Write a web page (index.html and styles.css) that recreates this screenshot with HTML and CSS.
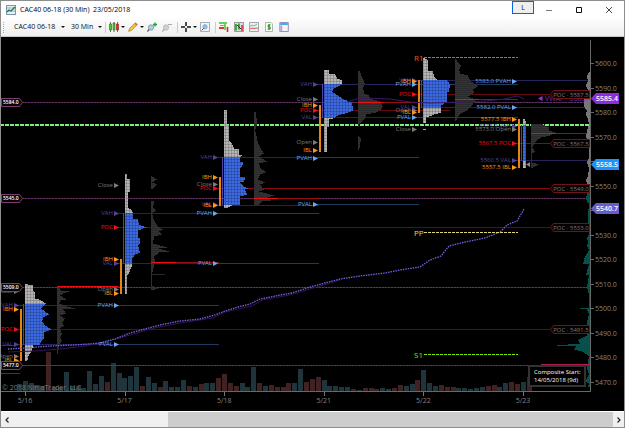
FILE: index.html
```
<!DOCTYPE html>
<html lang="en">
<head>
<meta charset="utf-8">
<title>CAC40 06-18 (30 Min) 23/05/2018</title>
<link rel="stylesheet" href="styles.css">
</head>
<body>
<main class="window">
  <header class="titlebar">
    <svg class="app-icon" viewBox="0 0 10 10"><rect x=".5" y=".5" width="9" height="9" fill="#e8f0f4" stroke="#7e94a8"/><path d="M1 3h8M1 6h8" stroke="#89a8cd"/><path d="M1 7l2-2 2 1 4-4" fill="none" stroke="#267b39" stroke-width="1.3"/></svg>
    <h1>CAC40 06-18 (30 Min)&nbsp; 23/05/2018</h1>
    <div class="window-controls">
      <button class="link-button">L</button>
      <button aria-label="Minimize"><svg viewBox="0 0 8 8"><path d="M1 4.500h6" stroke="#777"/></svg></button>
      <button aria-label="Maximize"><svg viewBox="0 0 8 8"><path d="M1.500 1.500h5v5h-5z" fill="none" stroke="#111"/></svg></button>
      <button aria-label="Close"><svg viewBox="0 0 8 8"><path d="M1 1l6 6M7 1l-6 6" stroke="#333" stroke-width=".9"/></svg></button>
    </div>
  </header>
  <nav class="toolbar" aria-label="Chart tools">
    <i class="grip"></i>
    <button class="picker instrument">CAC40 06-18<b></b></button>
    <button class="picker interval">30 Min<b></b></button>
    <i class="sep"></i>
    <button class="tool menu" aria-label="Chart style"><svg viewBox="0 0 10 10"><path d="M1.500 0v10M5 0v10M8.500 0v10" stroke="#333" stroke-width=".7"/><path d="M.5 2h2v6h-2zM4 1h2v7H4z" fill="#49c52c" stroke="#276e19" stroke-width=".6"/><path d="M7.500 2h2v6h-2z" fill="#e22" stroke="#911" stroke-width=".6"/></svg><b></b></button>
    <button class="tool menu" aria-label="Drawing tools"><svg viewBox="0 0 10 10"><path d="M.7 9.300l.8-2.800L7.500.8l1.800 1.800-6 5.900z" fill="#f6c63d" stroke="#a9791c" stroke-width=".7"/><path d="M7 1.300l1.900 1.900" stroke="#e06a48" stroke-width="1.300"/></svg><b></b></button>
    <button class="tool" aria-label="Zoom in"><svg viewBox="0 0 10 10"><circle cx="4" cy="5.500" r="2.700" fill="#a9cce8" stroke="#86939c" stroke-width=".8"/><path d="M2.200 7.500L.3 9.600" stroke="#555" stroke-width="1.200"/><path d="M8 .5v4M6 2.500h4" stroke="#15a52b" stroke-width="1.300"/></svg></button>
    <button class="tool" aria-label="Zoom out"><svg viewBox="0 0 10 10"><circle cx="4" cy="5.500" r="2.700" fill="#d0d0d0" stroke="#b6b6b6" stroke-width=".8"/><path d="M2.200 7.500L.3 9.600M6 2.500h4" stroke="#aaa" stroke-width="1.200"/></svg></button>
    <i class="sep"></i>
    <button class="tool menu" aria-label="Crosshair"><svg viewBox="0 0 10 10"><path d="M5 0v4M5 6v4M0 5h4M6 5h4" stroke="#111" stroke-width="1.500"/></svg><b></b></button>
    <button class="tool" aria-label="Zoom to frame"><svg viewBox="0 0 10 10"><path d="M.5.5h9v9h-9z" fill="#f3f6f8" stroke="#929ba3" stroke-width=".8"/><circle cx="5" cy="4.800" r="2.200" fill="#8fc1e8" stroke="#7d98b0" stroke-width=".7"/><path d="M3.500 6.500L1.800 8.300" stroke="#444"/></svg></button>
    <i class="sep"></i>
    <button class="tool" aria-label="Chart trader"><svg viewBox="0 0 10 10"><path d="M0 1h8" stroke="#47c72c" stroke-width="1.600"/><path d="M1 3.500h5" stroke="#999"/><path d="M0 6h5" stroke="#d22" stroke-width="1.800"/><path d="M6 2v6" stroke="#51c936" stroke-width="1.600"/><path d="M8.500 5v5" stroke="#d22" stroke-width="1.600"/></svg></button>
    <button class="tool" aria-label="Data series"><svg viewBox="0 0 10 10"><path d="M.5.5h9v9h-9z" fill="#d9dde0" stroke="#777" stroke-width=".7"/><path d="M2 2v6.500M5 1.500v6" stroke="#25951c" stroke-width="1.600"/><path d="M3 3l4 4" stroke="#333"/><path d="M8 3v6" stroke="#d22" stroke-width="1.500"/></svg></button>
    <button class="tool" aria-label="Indicators"><svg viewBox="0 0 10 10"><path d="M.5.5h9v9h-9z" fill="#edf0f1" stroke="#8d949b" stroke-width=".8"/><path d="M1 4.500l2-1.500 2 1 3-2" fill="none" stroke="#3cae7f" stroke-width=".8"/><path d="M1 7l2-1 2 .5L9 6" fill="none" stroke="#d44" stroke-width=".9"/></svg></button>
    <button class="tool" aria-label="Strategies"><svg viewBox="0 0 10 10"><path d="M1.500.5h5.500l1.500 1.500v7.500h-7z" fill="#fff" stroke="#8b9b8b" stroke-width=".7"/><path d="M6.700 3H4.200v2h2v2H3.500M5 2v6" fill="none" stroke="#258c19"/></svg></button>
    <button class="tool" aria-label="Properties"><svg viewBox="0 0 10 10"><path d="M.8.5h8.500v9H.8z" fill="#f4f4fa" stroke="#777da5" stroke-width=".8"/><path d="M1.300 2h7.500" stroke="#2395e4" stroke-width="1.600"/><path d="M2.300 3.500v6" stroke="#b399ef" stroke-width="1.800"/></svg></button>
  </nav>
  <section class="chart-panel" aria-label="Price chart">
    <svg id="chart" viewBox="1 37 623 374" role="img" aria-label="CAC40 volume profile"></svg>
  </section>
  <footer class="scrollbar">
    <button aria-label="Scroll left"><svg viewBox="0 0 6 6"><path d="M4.500.5L2 3l2.500 2.500" fill="none" stroke="#222" stroke-width="1.200"/></svg></button>
    <div class="track"><div class="thumb"></div></div>
    <button aria-label="Scroll right"><svg viewBox="0 0 6 6"><path d="M1.500.5L4 3 1.500 5.500" fill="none" stroke="#222" stroke-width="1.200"/></svg></button>
  </footer>
</main>
<script src="chart.js"></script>
</body>
</html>
```
FILE: styles.css
```
* { box-sizing: border-box; }
body { margin: 0; background: #fff; font: 7px/10px "Open Sans", sans-serif; color: #111; }
button { border: 0; padding: 0; background: none; font: inherit; color: inherit; display: flex; align-items: center; justify-content: center; }
.window { border: 1px solid #8d8d8d; display: flex; flex-direction: column; min-height: 100vh; }
.titlebar { display: flex; align-items: center; height: 17px; padding-left: 5px; }
.app-icon { width: 10px; height: 10px; margin-right: 4px; }
h1 { font-size: 7px; font-weight: 500; margin: 0; color: #000; }
.window-controls { display: flex; align-self: stretch; margin-left: auto; }
.window-controls button { width: 30px; }
.window-controls svg { width: 8px; height: 8px; }
.window-controls .link-button { width: 22px; height: 13px; border: 1px solid #0b64d8; background: #eee; color: #20204a; }
.toolbar { display: flex; align-items: center; height: 19px; background: linear-gradient(#fdfdfd, #eeeeee); border-bottom: 1px solid #c8c8c8; padding-left: 2px; font-weight: 500; }
.grip { height: 11px; border-left: 1px dotted #aaa; margin-right: 10px; }
.sep { height: 11px; border-left: 1px solid #ccc; margin-right: 3px; }
.picker { justify-content: space-between; }
.picker b, .tool b { border: 2px solid transparent; border-top-color: #111; border-bottom-width: 0; margin-left: 2px; }
.instrument { width: 51px; margin-right: 6px; }
.interval { width: 31px; margin-right: 3px; }
.tool { margin-right: 5px; }
.tool.menu { margin-right: 3px; }
.tool svg { width: 10px; height: 10px; }
.chart-panel { flex: 1; background: #000; }
#chart { display: block; width: 100%; height: auto; font-family: "Open Sans", sans-serif; font-size: 6px; }
.scrollbar { display: flex; height: 16px; background: #f0f0f0; border-top: 1px solid #fff; }
.scrollbar button { width: 11px; }
.scrollbar svg { width: 6px; height: 6px; }
.track { flex: 1; display: flex; }
.thumb { width: 74%; margin-left: 26%; background: #cdcdcd; }
.axis { font-size: 7px; fill: #858585; }
.pivot { font-size: 8px; }
.vwap { font-size: 7px; fill: #7b2bb8; }
.price { font-size: 7px; fill: #fff; font-weight: 600; }
.copyright { font-size: 7px; fill: #777; }
.poc { fill: #777; }
.left-price { font-size: 5px; fill: #fff; font-weight: 600; }
.note { font-size: 6px; fill: #fff; }
```
FILE: chart.js
```
const svg = document.getElementById('chart');
let out = '';
const rect = (x, y, w, h, fill) => { out += `<rect x="${x}" y="${y}" width="${w}" height="${h}" fill="${fill}" shape-rendering="crispEdges"/>`; };
const line = (x1, x2, y, color, dash = '', w = 1) => { out += `<path d="M${x1} ${y + .5}H${x2}" stroke="${color}" stroke-width="${w}" stroke-dasharray="${dash}" shape-rendering="crispEdges"/>`; };
const text = (x, y, s, cls = '', fill = '', anchor = 'start') => { out += `<text x="${x}" y="${y}" class="${cls}" ${fill ? `fill="${fill}"` : ''} text-anchor="${anchor}">${s}</text>`; };

out += '<defs><pattern id="cells" width="3" height="3" patternUnits="userSpaceOnUse"><path d="M0 .5H3M.5 0V3" stroke="#000" stroke-opacity=".16"/></pattern></defs>';

// Volume bars: negative values are down bars
const volume = [7,10,8,6,5,-39,4,4,19,5,5,3,20,7,15,-9,28,18,13,15,24,-5,14,8,-4,10,4,4,11,-5,4,-7,8,8,-13,-17,-8,-5,8,4,24,-8,5,-6,-4,-4,-8,8,22,-9,-12,-14,11,5,5,4,4,-2,1,-3,-3,-2,3,2,-3,-6,5,7,-11,21,8,5,-6,-4,-4,3,3,2,3,4,-5,-6,4,8,-9,-7,9,-14];
volume.forEach((v, i) => rect(16.900 + i * 5.860, 391 - Math.abs(v), 5, Math.abs(v), v < 0 ? '#402222' : '#20343c'));

// Reference levels
[102, 198, 287, 365].forEach(y => { line(22, 590, y, '#351a38'); line(22, 590, y, '#633462', '2 1'); });
line(0, 15, 345, '#791010'); line(0, 20, 373, '#203e63');
line(18, 551, 329, '#65090e'); line(118, 551, 227, '#65090e'); line(217, 551, 188, '#8b0b0d');
line(317, 450, 110, '#65090e'); line(416, 551, 94, '#65090e'); line(516, 551, 143, '#8b0b0d');
[[18,119,305],[18,119,344],[118,219,213],[118,219,263],[217,319,157],[217,319,205],[317,419,84],[317,419,117],[416,590,80],[416,590,107],[516,590,160]].forEach(a => line(...a, '#26235a'));
[[118,219,305],[118,219,344],[217,319,213],[217,319,263],[317,419,157],[317,419,204],[416,518,84],[416,518,117]].forEach(a => line(...a, '#203b5e'));
line(22, 119, 365, '#313e7e');
line(0, 590, 124.500, '#7cf07c', '4 1', 2);

// Profile outlines are [y, width] pairs sampled every pixel row
function outline(points, visit) {
  for (let i = 0; i < points.length - 1; i++) {
    const [y1, w1] = points[i], [y2, w2] = points[i + 1];
    for (let y = y1; y < y2; y++) visit(y, Math.round(w1 + (w2 - w1) * (y - y1) / (y2 - y1)));
  }
}
const sessions = [
  {x:25, va:[304,345], ib:[309,361], p:[[284,3],[285,8],[290,8],[292,10],[298,10],[299,14],[303,21],[305,19],[308,16],[314,24],[317,18],[321,17],[325,20],[329,26],[332,19],[338,19],[341,16],[344,15],[345,8],[350,7],[354,4],[361,2]]},
  {x:125, va:[213,264], ib:[259,294], p:[[174,2],[178,2],[179,5],[191,5],[192,3],[207,3],[210,7],[214,8],[218,8],[219,13],[224,14],[227,21],[230,13],[237,13],[238,15],[243,15],[245,13],[252,15],[254,10],[258,7],[265,7],[270,5],[274,3],[275,2],[294,2]]},
  {x:224, va:[157,205], ib:[177,206], p:[[110,3],[124,3],[125,5],[140,5],[143,8],[148,10],[149,15],[154,15],[155,18],[157,16],[161,16],[162,19],[166,18],[168,16],[176,16],[177,21],[181,20],[182,16],[186,20],[188,24],[189,21],[194,23],[196,16],[204,16],[205,8],[208,2]]},
  {x:324, va:[84,118], ib:[105,152], p:[[70,5],[73,5],[74,11],[78,13],[80,18],[84,18],[88,10],[91,8],[96,15],[99,20],[102,28],[110,29],[112,24],[115,14],[118,9],[119,5],[126,5],[127,3],[152,3]]},
  {x:423, va:[80,108], ib:[80,113], p:[[58,2],[60,5],[70,5],[71,10],[76,11],[79,14],[80,24],[84,27],[91,26],[92,24],[101,24],[105,18],[112,18],[114,11],[116,6],[117,3],[123,3]]},
  {x:523, va:[125,161], ib:[119,168], p:[[119,2],[122,3],[168,3]]}
];
sessions.forEach(s => {
  outline(s.p, (y, w) => rect(s.x, y, w, 1, y >= s.va[0] && y < s.va[1] ? '#3c68e0' : '#b4b4b4'));
  outline(s.p, (y, w) => rect(s.x, y, w, 1, 'url(#cells)'));
  rect(s.x - 2, s.va[0], 1, s.va[1] - s.va[0], '#51439d');
  rect(s.x - 5, s.ib[0], 2, s.ib[1] - s.ib[0], '#e68610');
});
rect(423, 129, 3, 1, '#aaa');

const hist = [
  [57, [[286,1],[290,4],[291,12],[293,6],[295,3],[299,9],[300,4],[303,2],[306,10],[308,18],[309,6],[313,9],[315,3],[318,8],[322,5],[325,7],[328,3],[334,5],[337,3],[340,5],[345,2],[354,1]]],
  [151, [[176,1],[179,6],[182,1],[184,6],[188,2],[189,0],[200,0],[201,3],[207,2],[210,5],[213,1],[217,2],[222,4],[226,7],[229,12],[231,8],[234,11],[236,3],[243,2],[247,16],[248,8],[251,18],[252,8],[256,3],[261,4],[266,3],[273,1],[274,14],[275,1],[285,1],[288,7],[290,1]]],
  [254, [[112,2],[124,3],[130,1],[138,3],[143,4],[149,7],[153,10],[156,5],[161,13],[163,5],[167,6],[172,12],[174,6],[179,4],[182,11],[184,6],[189,10],[191,5],[195,20],[197,14],[200,17],[201,8],[205,4]]],
  [358, [[71,2],[77,4],[81,6],[84,7],[87,5],[93,6],[95,11],[98,12],[101,22],[106,25],[109,23],[112,18],[114,8],[118,7],[122,3],[124,1],[128,0],[135,0],[138,3],[145,2],[150,1]]],
  [455, [[59,1],[62,3],[65,6],[69,4],[73,5],[75,13],[80,15],[86,23],[89,18],[92,19],[96,13],[99,20],[102,19],[106,16],[110,12],[113,6],[117,2],[121,1]]],
  [531, [[124,12],[127,18],[130,18],[132,24],[135,19],[137,10],[139,7],[143,3],[147,1],[151,4],[153,1],[162,1],[164,8],[167,2],[168,1]]]
];
hist.forEach(([x, p]) => outline(p, (y, w) => rect(x, y, w, 1, y % 2 ? '#333' : '#2b2b2b')));
[[57,118,119,286],[151,176,219,262],[254,278,319,198],[358,383,419,102],[455,479,518,99],[531,556,590,133]].forEach(([a, b, c, y]) => { line(b, c, y, '#970d14'); line(a, b, y, '#f00c14'); });

// Composite profile beside the axis
outline([[72,1],[76,3],[80,2],[85,4],[89,2],[92,1],[99,6],[106,6],[110,3],[114,4],[118,2],[124,1],[130,3],[137,4],[141,1],[158,1],[162,3],[168,1],[176,2],[180,4],[184,2]], (y, w) => rect(590 - w, y, w, 1, '#777'));
outline([[184,1],[193,3],[199,4],[203,1],[215,2],[234,1],[237,3],[242,2],[245,3],[250,1],[256,5],[263,7],[264,1],[274,4],[275,1],[287,3],[294,1],[307,1],[308,10],[309,3],[313,1],[322,3],[326,2],[335,3],[338,9],[340,12],[343,10],[345,33],[346,14],[349,16],[351,8],[354,3],[356,1],[368,3],[374,1],[381,5],[383,1],[387,2]], (y, w) => rect(590 - w, y, w, 1, '#07504b'));
line(541, 590, 364, '#b21a4e');

const path = (points, color, dash, w) => { out += `<polyline points="${points}" fill="none" stroke="${color}" stroke-width="${w}" stroke-dasharray="${dash}"/>`; };
path('8,352 35,351 60,349 85,346 105,342 130,335 150,329 180,323 213,318 225,312 252,306 262,300 290,295 310,289 340,280', '#34135b', '', 1);
path('8,349 25,348 50,346 75,345 100,343 115,339 130,333 145,329 160,325 180,321 200,319 215,315 225,311 238,307 250,304 260,299 275,296 292,293 310,287 325,283 340,279 360,276 385,273 400,270 420,267 430,260 441,256 449,246 465,242 485,238 500,232 507,225 517,221 524,209', '#7562dd', '1.500 1', 1.300);
path('347,102 357,99 367,98 390,99 410,102 430,103 465,102 485,101 505,99 517,96 524,99', '#3d1767', '', 1);

// Row labels with their pointer triangles
const C = {p:'#51459b', o:'#ff9818', r:'#f40e18', g:'#7d7d7d', b:'#66a9f4'};
const labels = [
  [18,[['Close',291,'g'],['VAH',305,'p'],['IBH',309,'o'],['POC',329,'r'],['VAL',344,'p'],['Open',356,'g'],['IBL',360,'o']]],
  [118,[['Close',185,'g'],['VAH',213,'p'],['POC',227,'r'],['IBH',259,'o'],['VAL',263,'p'],['Open',289,'g'],['IBL',293,'o'],['PVAH',305,'b'],['PVAL',344,'b']]],
  [217,[['VAH',157,'p'],['IBH',177,'o'],['Close',184,'g'],['POC',188,'r'],['VAL',204,'p'],['IBL',205,'o'],['PVAH',213,'b'],['PVAL',263,'b']]],
  [317,[['VAH',84,'p'],['Close',99,'g'],['IBH',105,'o'],['POC',110,'r'],['VAL',117,'p'],['Open',142,'g'],['IBL',150,'o'],['PVAH',158,'b'],['PVAL',204,'b']]],
  [416,[['VAH',80,'p'],['IBH',81,'o'],['PVAH',84,'b'],['POC',94,'r'],['VAL',107,'p'],['Open',110,'g'],['IBL',112,'o'],['PVAL',117,'b'],['Close',129,'g']]],
  [516,[['5583.0 PVAH',81,'b'],['5582.0 PVAL',107,'b'],['5577.5 IBH',119,'o'],['5575.0 VAH',126,'p'],['5573.0 Open',129,'g'],['5567.5 POC',143,'r'],['5560.5 VAL',160,'p'],['5557.5 IBL',167,'o']]]
];
labels.forEach(([x, rows]) => rows.forEach(([s, y, c]) => {
  out += `<path d="M${x - 4} ${y - 2}l5 2.500-5 2.500z" fill="${C[c]}"/>`;
  text(x - 5, y + 2, s, '', C[c], 'end');
}));
out += '<path d="M542.500 96v5l-4.500-2.500z" fill="#9633dd"/><path d="M530 162v5l-4-2.500z" fill="#888"/>';
text(545, 101, 'VWAP · 5585.4', 'vwap');

// Pivots
[[57,'R1','#ff5018'],[232,'PP','#e6d775'],[354,'S1','#7ee900']].forEach(([y, s, c]) => { text(414, y + 4, s, 'pivot', c); line(424, 518, y, c, '3 1'); });

// Tags
[[94,'5587.5'],[143,'5567.5'],[188,'5549.0'],[227,'5533.0'],[329,'5491.5']].forEach(([y, v]) => {
  out += `<path d="M550.500 ${y + .5}l3-4h36v8h-36z" fill="#080101" stroke="#71131a"/>`;
  text(571, y + 3, 'POC · ' + v, 'poc', '', 'middle');
});
[[102,'5584.0'],[198,'5545.0'],[287,'5509.0'],[365,'5477.0']].forEach(([y, v]) => {
  out += `<path d="M1.500 ${y - 3.500}h18l3 4-3 4h-18z" fill="#0b050b" stroke="#77406f"/>`;
  text(3, y + 2, v, 'left-price');
});

// Axes
rect(590, 40, 1, 352, '#686868');
rect(0, 391, 591, 1, '#686868');
for (let i = 0; i <= 13; i++) {
  const y = 63 + i * 24.500;
  line(591, 594, Math.round(y), '#686868');
  if (i !== 6) text(595, y + 3, (5600 - i * 10) + '.0', 'axis');
}
[[98,'5585.4','#9129e4'],[164,'5558.5','#1e90ff'],[208,'5540.7','#6c5ad1']].forEach(([y, v, c]) => {
  out += `<path d="M591 ${y + .5}l5-5.500h23v11h-23z" fill="${c}"/>`;
  text(596, y + 3, v, 'price');
});
['5/16','5/17','5/18','5/21','5/22','5/23'].forEach((d, i) => {
  const x = 25 + i * 99.600;
  rect(Math.round(x), 392, 1, 4, '#777');
  text(x, 403, d, 'axis', '', 'middle');
});
text(2, 390, '© 2018 NinjaTrader, LLC', 'copyright');
out += '<rect x="529" y="366" width="56" height="20" fill="#000" stroke="#333" stroke-width="2"/>';
text(534, 374, 'Composite Start:', 'note');
text(534, 382, '14/05/2018 (9d)', 'note');
svg.innerHTML = out;
```
